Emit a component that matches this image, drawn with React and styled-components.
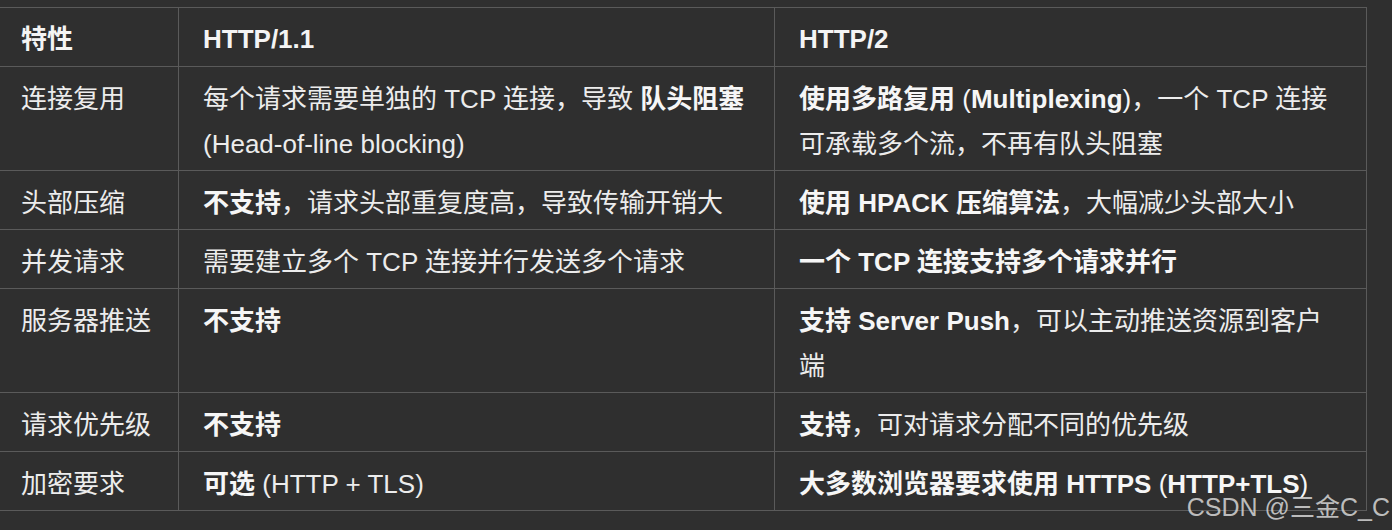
import React from "react";
import styled, { createGlobalStyle } from "styled-components";

const GlobalStyle = createGlobalStyle`
  html, body {
    margin: 0;
    padding: 0;
    background: #2f2f2f;
  }
  body {
    width: 1392px;
    height: 530px;
    overflow: hidden;
    font-family: "Liberation Sans", "Noto Sans CJK SC", sans-serif;
  }
`;

// each cell is a list of [text, bold] runs
const rows = [
  {
    name: "连接复用",
    v1: [["每个请求需要单独的 TCP 连接，导致 "], ["队头阻塞", true], [" (Head-of-line blocking)"]],
    v2: [["使用多路复用 (Multiplexing)", true], ["，一个 TCP 连接可承载多个流，不再有队头阻塞"]],
  },
  {
    name: "头部压缩",
    v1: [["不支持", true], ["，请求头部重复度高，导致传输开销大"]],
    v2: [["使用 HPACK 压缩算法", true], ["，大幅减少头部大小"]],
  },
  {
    name: "并发请求",
    v1: [["需要建立多个 TCP 连接并行发送多个请求"]],
    v2: [["一个 TCP 连接支持多个请求并行", true]],
  },
  {
    name: "服务器推送",
    v1: [["不支持", true]],
    v2: [["支持 Server Push", true], ["，可以主动推送资源到客户端"]],
  },
  {
    name: "请求优先级",
    v1: [["不支持", true]],
    v2: [["支持", true], ["，可对请求分配不同的优先级"]],
  },
  {
    name: "加密要求",
    v1: [["可选", true], [" (HTTP + TLS)"]],
    v2: [["大多数浏览器要求使用 HTTPS (HTTP+TLS)", true]],
  },
];

// parens in the bold runs are drawn lighter, as in the source font
const withParens = (text) =>
  text.split(/([()])/).map((t, i) => (t === "(" || t === ")" ? <Paren key={i}>{t}</Paren> : t));

const Rich = ({ parts }) =>
  parts.map(([text, bold], i) =>
    bold ? <Strong key={i}>{withParens(text)}</Strong> : <span key={i}>{text}</span>
  );

export default function App() {
  return (
    <Page>
      <GlobalStyle />
      <Table>
        <Cell $head>特性</Cell>
        <Cell $head>HTTP/1.1</Cell>
        <Cell $head>HTTP/2</Cell>
        {rows.map((r) => (
          <React.Fragment key={r.name}>
            <Cell>{r.name}</Cell>
            <Cell>
              <Rich parts={r.v1} />
            </Cell>
            <Cell>
              <Rich parts={r.v2} />
            </Cell>
          </React.Fragment>
        ))}
      </Table>
      <Watermark>CSDN @三金C_C</Watermark>
    </Page>
  );
}

const Page = styled.div`
  position: relative;
  width: 1392px;
  height: 530px;
  padding-top: 7px;
  box-sizing: border-box;
`;

const Table = styled.div`
  // grid
  display: grid;
  grid-template-columns: 182px 596px 592px;

  // box model
  margin-left: -3px;
  width: max-content;
  border-top: 1px solid #5a5a5a;

  // typography
  color: #ececec;
  font-size: 26px;
  line-height: 45px;
`;

const Cell = styled.div`
  box-sizing: border-box;
  padding: ${(p) => (p.$head ? "9px 22px 4px 24px" : "10px 22px 3px 24px")};
  border-right: 1px solid #5a5a5a;
  border-bottom: 1px solid #5a5a5a;
  font-weight: ${(p) => (p.$head ? 700 : 400)};
  color: ${(p) => (p.$head ? "#f4f4f4" : "#ececec")};
`;

const Strong = styled.b`
  font-weight: 700;
  color: #f6f6f6;
`;

const Paren = styled.span`
  font-weight: 400;
`;

const Watermark = styled.div`
  position: absolute;
  right: 2px;
  bottom: 8px;
  font-family: "Liberation Sans", "Noto Sans CJK SC", sans-serif;
  font-size: 25px;
  line-height: 30px;
  color: rgba(215, 215, 215, 0.85);
  white-space: nowrap;
`;
